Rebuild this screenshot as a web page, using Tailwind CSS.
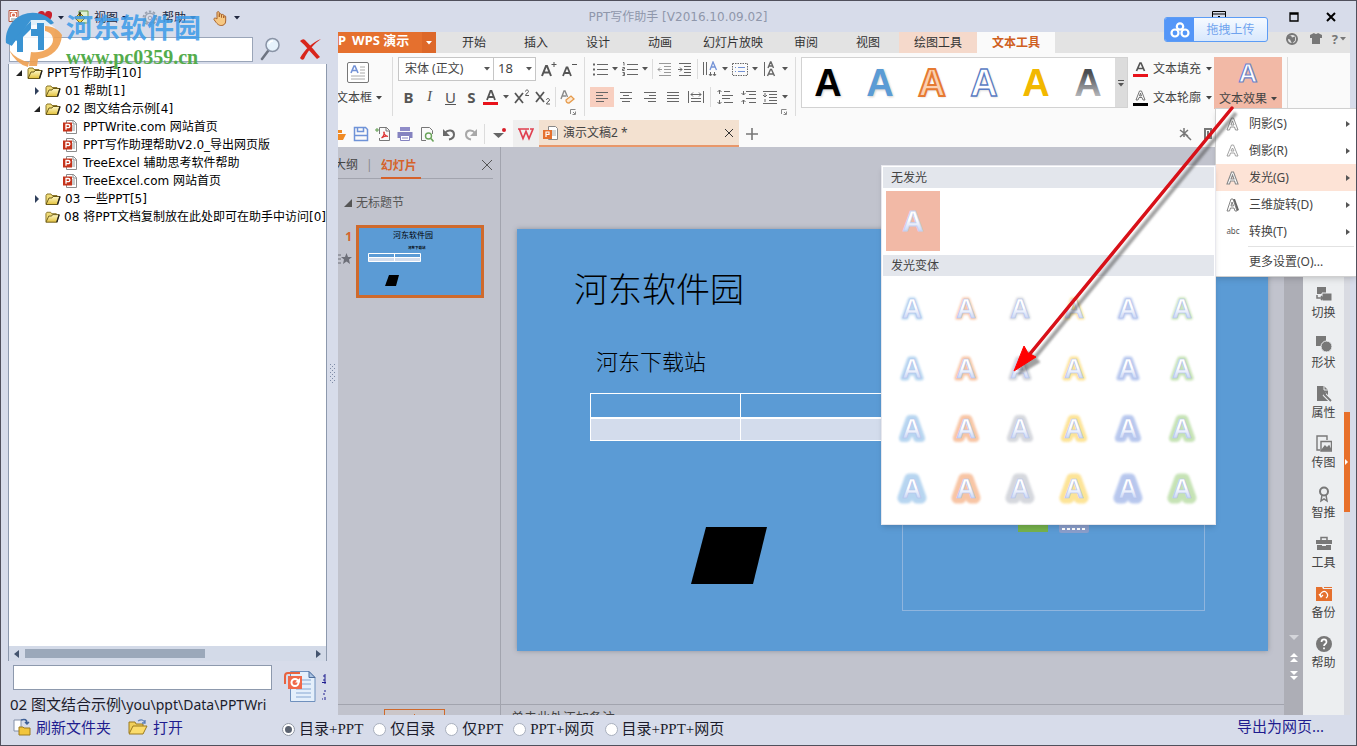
<!DOCTYPE html>
<html lang="zh-CN">
<head>
<meta charset="utf-8">
<title>PPT写作助手</title>
<script src="https://cdn.jsdelivr.net/npm/@tailwindcss/browser@4"></script>
</head>
<body class="relative flex h-screen flex-col overflow-hidden border border-[#50505c] bg-[#d7dcea] font-['Noto_Sans','Noto_Sans_CJK_SC',sans-serif] text-xs text-[#444]">

<svg class="absolute h-0 w-0" aria-hidden="true">
  <defs>
    <linearGradient id="folderFill" x1="0" y1="0" x2="0" y2="1"><stop offset="0" stop-color="#fff9c8"/><stop offset="1" stop-color="#e2c13c"/></linearGradient>
    <linearGradient id="glassA" x1="0" y1="0" x2="0" y2="1"><stop offset=".45" stop-color="#fff"/><stop offset=".85" stop-color="#c3d1f5"/></linearGradient>
    <linearGradient id="greyA" x1="0" y1="0" x2="0" y2="1"><stop offset=".25" stop-color="#4a4c50"/><stop offset=".85" stop-color="#bcbec2"/></linearGradient>
    <filter id="soft" x="-40%" y="-40%" width="180%" height="180%"><feGaussianBlur stdDeviation="1.2"/></filter>
  </defs>
  <symbol id="caret" viewBox="0 0 6 4"><path d="M0 0h6L3 3.5z" fill="currentColor"/></symbol>
  <symbol id="folder" viewBox="0 0 16 14">
    <path d="M1 12V3.500l1-1.500h4l1 1.500h5V6" fill="#f0dc78" stroke="#8a7628" stroke-width="1"/>
    <path d="M1 12.500 4 6h3l1-1.500h7L12.500 12.500z" fill="url(#folderFill)" stroke="#6b5a18" stroke-width="1"/>
    <path d="M15 4.500 12.500 12.500" stroke="#222" stroke-width="1.400"/>
  </symbol>
  <symbol id="pptfile" viewBox="0 0 14 14">
    <path d="M3.500.500h7l3 3v10h-10z" fill="#fff" stroke="#8c8c8c"/><path d="M10 .500v3.500h3.500" fill="none" stroke="#8c8c8c"/>
    <path d="M9 6h3M9 8h3M9 10h3" stroke="#999"/>
    <path d="M0 2.500h9v9H0z" fill="#c5331b"/><path d="M3 9.800V4.500h2.300a1.500 1.500 0 0 1 0 3.200H3" fill="none" stroke="#fff" stroke-width="1.300"/>
  </symbol>
  <symbol id="launcher" viewBox="0 0 6 6"><path d="M.5 5V.5H5.500M5.500 2.500v3h-3M3 3l2 2" fill="none" stroke="#888"/></symbol>
</svg>

<div class="flex min-h-0 flex-1">

  <!-- Document library -->
  <aside class="flex w-[337px] shrink-0 flex-col pl-[7px] font-['DejaVu_Sans','Noto_Sans_CJK_SC',sans-serif] text-black">
    <nav class="flex h-[33px] shrink-0 items-center text-[#202840]">
      <button aria-label="PPT" class="w-[29px]"><svg class="h-4 w-4" viewBox="0 0 16 16"><path d="M1 .5h9v11H1z" fill="#fff" stroke="#b4533d"/><path d="M2 2h7v5H2z" fill="#d96a4f"/><circle cx="5.500" cy="5" r="2.200" fill="none" stroke="#fff" stroke-width="1.200"/><path d="M3 9h6M3 11h4" stroke="#888"/></svg></button>
      <button aria-label="收藏" class="flex w-[37px] items-center gap-[5px]"><svg class="h-4 w-4" viewBox="0 0 16 16"><path d="M8 14C2 9.500 1 7.500 1 5a3.500 3.500 0 0 1 7-1 3.500 3.500 0 0 1 7 1c0 2.500-1 4.500-7 9z" fill="#c9202c"/></svg><svg class="h-1 w-1.5"><use href="#caret"/></svg></button>
      <button class="flex w-[68px] items-center gap-1"><svg class="h-4 w-4" viewBox="0 0 16 16"><path d="M5 1h9v12H5z" fill="#dff0d2" stroke="#6d9c4a"/><path d="m1 8 5-5 5 5-5 5z" fill="#edd24a" stroke="#7a6a1c"/><path d="M6 2v5" stroke="#222" stroke-width="1.500"/></svg><span>视图</span><svg class="h-1 w-1.5"><use href="#caret"/></svg></button>
      <button class="flex w-[70px] items-center gap-1"><svg class="h-4 w-4" viewBox="0 0 16 16" fill="none" stroke="#9aa3b2"><circle cx="8" cy="8" r="6.500" stroke-width="2" stroke-dasharray="2.400 1.700"/><circle cx="8" cy="8" r="4.800" stroke-width="1.500"/><circle cx="8" cy="8" r="1.800"/></svg><span>帮助</span><svg class="h-1 w-1.5"><use href="#caret"/></svg></button>
      <button aria-label="手型" class="flex items-center gap-1.5"><svg class="h-4 w-4" viewBox="0 0 16 16"><path d="M5 9V2.500a1.200 1.200 0 0 1 2.300 0V7 4.800a1.100 1.100 0 0 1 2.200 0V7.500 5.500a1.100 1.100 0 0 1 2.200 0V8 6.800a1 1 0 0 1 2 0V11c0 3-2 4.500-4.500 4.500S5 14 2 9.500C1.500 8 3.500 7.500 5 9z" fill="#f6c883" stroke="#a8622a"/></svg><svg class="h-1 w-1.5"><use href="#caret"/></svg></button>
    </nav>
    <div class="flex h-[30px] shrink-0 items-center pl-px">
      <input aria-label="搜索" class="h-[25px] w-[244px] border border-[#9aa5b8] bg-white px-1">
      <button aria-label="查找" class="ml-1.5"><svg class="h-6 w-6" viewBox="0 0 24 24"><path d="m9 14-6 8" stroke="#6d7380" stroke-width="2.500" stroke-linecap="round"/><circle cx="13.500" cy="8" r="6.500" fill="#e6f2fc" stroke="#8a94a6" stroke-width="1.500"/><path d="M10 7a4 4 0 0 1 4-3" fill="none" stroke="#fff" stroke-width="1.500"/></svg></button>
      <button aria-label="清除" class="ml-4"><svg class="h-6 w-6" viewBox="0 0 24 24"><path d="M1 4q3-3 5-1c4 4 10 11 15 17l-3 2C12 16 7 9 1 4zM22 2C16 6 9 13 5 22q-2 2-4-1C6 12 14 5 22 2z" fill="#d8261c"/></svg></button>
    </div>
    <div class="flex min-h-0 w-[319px] flex-1 flex-col border-x border-[#8d99ad] bg-white">
      <ul class="flex-1 overflow-hidden leading-[18px] whitespace-nowrap">
        <li class="flex items-center gap-1 pl-1.5"><svg class="h-2 w-2" viewBox="0 0 8 8"><path d="M7 1v6H1z" fill="#222"/></svg><svg class="h-3.5 w-4"><use href="#folder"/></svg><span>PPT写作助手[10]</span></li>
        <li class="flex items-center gap-1 pl-6"><svg class="h-2 w-2" viewBox="0 0 8 8"><path d="m2 0 4 4-4 4z" fill="#30405c"/></svg><svg class="h-3.5 w-4"><use href="#folder"/></svg><span>01 帮助[1]</span></li>
        <li class="flex items-center gap-1 pl-6"><svg class="h-2 w-2" viewBox="0 0 8 8"><path d="M7 1v6H1z" fill="#222"/></svg><svg class="h-3.5 w-4"><use href="#folder"/></svg><span>02 图文结合示例[4]</span></li>
        <li class="flex items-center gap-1.5 pl-[54px]"><svg class="h-3.5 w-3.5"><use href="#pptfile"/></svg><span>PPTWrite.com 网站首页</span></li>
        <li class="flex items-center gap-1.5 pl-[54px]"><svg class="h-3.5 w-3.5"><use href="#pptfile"/></svg><span>PPT写作助理帮助V2.0_导出网页版</span></li>
        <li class="flex items-center gap-1.5 pl-[54px]"><svg class="h-3.5 w-3.5"><use href="#pptfile"/></svg><span>TreeExcel 辅助思考软件帮助</span></li>
        <li class="flex items-center gap-1.5 pl-[54px]"><svg class="h-3.5 w-3.5"><use href="#pptfile"/></svg><span>TreeExcel.com 网站首页</span></li>
        <li class="flex items-center gap-1 pl-6"><svg class="h-2 w-2" viewBox="0 0 8 8"><path d="m2 0 4 4-4 4z" fill="#30405c"/></svg><svg class="h-3.5 w-4"><use href="#folder"/></svg><span>03 一些PPT[5]</span></li>
        <li class="flex items-center gap-1 pl-9"><svg class="h-3.5 w-4"><use href="#folder"/></svg><span>08 将PPT文档复制放在此处即可在助手中访问[0]</span></li>
      </ul>
      <div class="flex h-[15px] items-center bg-[#d3dae8] px-1">
        <svg class="h-2 w-2" viewBox="0 0 8 8"><path d="M6 0v8L1 4z" fill="#44546e"/></svg>
        <div class="mx-1 flex-1"><div class="h-[9px] w-[63%] bg-[#9ba8ba]"></div></div>
        <svg class="h-2 w-2" viewBox="0 0 8 8"><path d="M2 0v8l5-4z" fill="#44546e"/></svg>
      </div>
    </div>
    <div class="flex h-[33px] shrink-0 pt-1 pl-[5px]">
      <input aria-label="名称" class="h-[25px] w-[259px] border border-[#8d99ad] bg-white px-1">
      <button aria-label="导出PPT" class="ml-3 flex h-9 items-start pt-1.5"><svg class="h-8 w-8" viewBox="0 0 32 32"><path d="M6.500.5H25l6 6v24H6.500z" fill="#e4effb" stroke="#6f90bd"/><path d="M25 .5v6h6z" fill="#a9c2e2" stroke="#4f6f9d"/><path d="M18 9h9M18 13h9M12 18h15M12 22h15M12 26h15" stroke="#86a7d2"/><path d="M1 13V5q0-3 3-3h12" fill="none" stroke="#e8633f" stroke-width="2"/><path d="M4 5h14v13H4z" fill="#f0694a"/><circle cx="11" cy="11.500" r="3.500" fill="none" stroke="#fff" stroke-width="2"/><path d="M11 11.500h5V7z" fill="#fff"/></svg></button>
      <svg class="mt-2 ml-1.5 h-8 w-1" viewBox="0 0 4 32"><path d="M3 1v10M1 3h2M1 7h2M0 9.500h4M3 17v2M1 21h2M3 24v3M0 26h1" stroke="#1f1c8f"/></svg>
    </div>
    <p class="h-[21px] w-[262px] shrink-0 overflow-hidden pl-0.5 font-['Noto_Sans','Noto_Sans_CJK_SC',sans-serif] text-[15px] leading-5 whitespace-nowrap text-[#1c1c2c]">02 图文结合示例<span class="text-sm">\you\ppt\Data\PPTWri</span></p>
  </aside>

  <!-- Editor -->
  <main class="flex min-w-0 flex-1 flex-col">
    <header class="flex h-[31px] shrink-0 items-center pr-[19px] text-black">
      <h1 class="w-[680px] text-center font-['DejaVu_Sans','Noto_Sans_CJK_SC',sans-serif] text-[#8f97ab]">PPT写作助手 [V2016.10.09.02]</h1>
      <div class="flex flex-1 justify-end gap-[25px]">
        <button aria-label="收起功能区"><svg class="h-3 w-3.5" viewBox="0 0 14 12"><path d="M.5.5h13v11H.5zM.5 3h13M7 11V5M4.500 7.500 7 5l2.500 2.500" fill="none" stroke="#000"/></svg></button>
        <button aria-label="最小化"><svg class="h-3 w-3" viewBox="0 0 12 12"><path d="M1 7h9" stroke="#000" stroke-width="2"/></svg></button>
        <button aria-label="最大化"><svg class="h-3 w-3" viewBox="0 0 12 12"><path d="M2 2h8v8H2zM2 3h8" fill="none" stroke="#000" stroke-width="1.300"/></svg></button>
        <button aria-label="关闭"><svg class="h-3 w-3" viewBox="0 0 12 12"><path d="m2 2 8 8m0-8-8 8" stroke="#000" stroke-width="2"/></svg></button>
      </div>
    </header>

    <div class="mr-1.5 flex min-h-0 flex-1 flex-col overflow-hidden">
      <!-- Ribbon tabs -->
      <nav class="flex h-[21px] shrink-0 bg-[#e3e3e3] leading-[21px] text-[#333]">
        <button class="mr-[7px] flex w-[98px] items-start bg-[#e5702e] text-[13px] leading-4 font-bold whitespace-nowrap text-white"><span>P</span><span class="ml-1.5">WPS 演示</span><span class="ml-auto flex h-full w-3.5 items-center justify-center bg-[#dd6829]"><svg class="h-1 w-1.5"><use href="#caret"/></svg></span></button>
        <button class="w-[62px]">开始</button><button class="w-[62px]">插入</button><button class="w-[62px]">设计</button><button class="w-[62px]">动画</button><button class="w-[84px]">幻灯片放映</button><button class="w-[62px]">审阅</button><button class="w-[62px]">视图</button>
        <button class="w-[78px] bg-[#f5d9cb]">绘图工具</button>
        <button class="w-[78px] bg-[#fafafa] font-bold text-[#cf5f1e]">文本工具</button>
        <div class="ml-auto flex items-center gap-2 pr-1 pb-2 text-[#777]">
          <svg class="h-3.5 w-4" viewBox="0 0 16 14"><circle cx="8" cy="7" r="5" fill="none" stroke="#777" stroke-width="2"/><path d="M3 3.500h4l1 2 3-1v4l-3 3-2-4-3-1z" fill="#777"/></svg>
          <svg class="h-3 w-4" viewBox="0 0 16 12"><path d="m2 2 4-2q2 2 4 0l4 2v3h-2v6H4V5H2z" fill="#777"/></svg>
          <button aria-label="帮助菜单" class="flex items-center gap-0.5 text-[13px] leading-3 font-bold">?<svg class="h-1 w-1.5"><use href="#caret"/></svg></button>
        </div>
      </nav>

      <!-- Ribbon -->
      <section class="flex h-[67px] shrink-0 bg-[#fafafa] pt-1 text-[#555]">
        <button class="flex w-[54px] flex-col gap-2 overflow-hidden whitespace-nowrap">
          <svg class="mt-1 ml-2 h-[23px] w-6" viewBox="0 0 24 23"><rect x="1.500" y="1.500" width="21" height="20" rx="1.500" fill="#fff" stroke="#777"/><path d="m5 12 3-7h1l3 7M6.500 9.500h4" fill="none" stroke="#7392d6" stroke-width="1.600"/><path d="M14 6h5M14 9h5M14 12h5M5 15h14M5 18h14" stroke="#aaa"/></svg>
          <span class="-ml-0.5 flex items-center gap-1 leading-3 text-[#444]">文本框<svg class="h-1 w-1.5"><use href="#caret"/></svg></span>
        </button>
        <div class="mb-1 flex w-[192px] flex-col border-l border-[#dcdcdc] pl-[5px]">
          <div class="flex h-6 items-center">
            <label class="relative"><span class="sr-only">字体</span><select class="h-6 w-24 appearance-none border border-[#c6c6c6] bg-white px-1.5 text-[#444]"><option>宋体 (正文)</option></select><svg class="absolute top-2.5 right-1 h-1 w-1.5"><use href="#caret"/></svg></label>
            <label class="relative"><span class="sr-only">字号</span><select class="h-6 w-[42px] appearance-none border border-l-0 border-[#c6c6c6] bg-white px-1 text-[13px] text-[#444]"><option>18</option></select><svg class="absolute top-2.5 right-1 h-1 w-1.5"><use href="#caret"/></svg></label>
            <button aria-label="增大字号" class="ml-1"><svg class="h-[18px] w-[18px]" viewBox="0 0 18 18" fill="none" stroke="#555"><path d="m2 16 4-10h1l4 10M4 12.500h5.500" stroke-width="2"/><path d="M14 2v5M11.500 4.500h5"/></svg></button>
            <button aria-label="减小字号" class="ml-0.5"><svg class="h-[18px] w-[18px]" viewBox="0 0 18 18" fill="none" stroke="#555"><path d="m3 16 3.500-8.500h1L11 16M4.500 13h5" stroke-width="1.800"/><path d="M12 4.500h5"/></svg></button>
          </div>
          <div class="mt-1.5 flex h-5 items-center font-['Noto_Sans',sans-serif] text-[15px]">
            <button class="w-[21px] font-bold">B</button><button class="w-[21px] font-['Liberation_Serif',serif] italic">I</button><button class="w-[21px] underline">U</button><button class="w-[21px] font-bold">S</button>
            <button aria-label="字体颜色" class="flex w-[31px] items-center gap-1"><svg class="ml-px h-4 w-4" viewBox="0 0 16 16"><path d="m4 11 3.500-9h1L12 11M5.500 8h5" fill="none" stroke="#555" stroke-width="1.800"/><path d="M0 13h15v3H0z" fill="#e8121a"/></svg><svg class="h-1 w-1.5"><use href="#caret"/></svg></button>
            <button aria-label="上标" class="w-[21px]"><svg class="h-4 w-[18px]" viewBox="0 0 18 16" fill="none" stroke="#555"><path d="m2 4 8 10m0-10L2 14" stroke-width="1.800"/><path d="M12.500 2.500c0-2 3-2 3 0 0 1.500-3 2-3 4h3.500"/></svg></button>
            <button aria-label="下标" class="w-[21px]"><svg class="h-4 w-[18px]" viewBox="0 0 18 16" fill="none" stroke="#555"><path d="m2 3 8 10m0-10L2 13" stroke-width="1.800"/><path d="M12.500 11c0-2 3-2 3 0 0 1.500-3 2-3 4h3.500"/></svg></button>
            <span class="h-5 w-px bg-[#dcdcdc]"></span>
            <button aria-label="清除格式" class="ml-1"><svg class="h-4 w-4" viewBox="0 0 16 16" fill="none"><path d="M1 10 4 2h1l2.500 6M2.500 7H6" stroke="#8a8a8a" stroke-width="1.400"/><path d="m6 11 5-4 3 3-5 4q-3 0-3-3z" fill="#fde8d0" stroke="#e59a4c" stroke-width="1.300"/></svg></button>
          </div>
          <button aria-label="字体设置" class="mt-0.5 mr-2 self-end"><svg class="h-1.5 w-1.5"><use href="#launcher"/></svg></button>
        </div>
        <div class="mb-1 flex w-[211px] flex-col border-l border-[#dcdcdc] pl-[5px]">
          <div class="flex h-6 items-center">
            <button aria-label="项目符号" class="flex w-[30px] items-center justify-center gap-1"><svg class="h-4 w-4" viewBox="0 0 16 16" stroke="#666"><path d="M5 3.500h11M5 8.500h11M5 13.500h11"/><path d="M1 3.500h2M1 8.500h2M1 13.500h2" stroke-width="2"/></svg><svg class="h-1 w-1.5"><use href="#caret"/></svg></button>
            <button aria-label="编号" class="flex w-[30px] items-center justify-center gap-1"><svg class="h-4 w-4" viewBox="0 0 16 16" fill="none" stroke="#666"><path d="M5 3.500h11M5 8.500h11M5 13.500h11M1 1.500h1v3M.5 6.500h2v1.500h-2v1.500h2M.5 11.500h2v3h-2M1 13h1"/></svg><svg class="h-1 w-1.5"><use href="#caret"/></svg></button>
            <span class="mx-0.5 h-5 w-px bg-[#dcdcdc]"></span>
            <button aria-label="减少缩进" class="flex w-5 justify-center"><svg class="h-4 w-4" viewBox="0 0 16 16" fill="none" stroke="#999"><path d="M2 2.500h12M7 5.500h7M7 8.500h7M7 11.500h7M2 14.500h12M5 8.500H1m2-2-2 2 2 2"/></svg></button>
            <button aria-label="增加缩进" class="flex w-5 justify-center"><svg class="h-4 w-4" viewBox="0 0 16 16" fill="none" stroke="#666"><path d="M2 2.500h12M7 5.500h7M7 8.500h7M7 11.500h7M2 14.500h12M1 8.500h4m-2-2 2 2-2 2"/></svg></button>
            <span class="mx-0.5 h-5 w-px bg-[#dcdcdc]"></span>
            <button aria-label="文字方向" class="flex w-[30px] items-center justify-center gap-1"><svg class="h-4 w-4" viewBox="0 0 16 16" fill="none" stroke="#666"><path d="M1.500 1v13M4.500 1v13M8.500 11v3M12.500 11v3M7 13l1.500 2 1.500-2M11 13l1.500 2 1.500-2"/><path d="m8 9 3-8 3.500 8M9.500 6H13" stroke="#7392d6" stroke-width="1.300"/></svg><svg class="h-1 w-1.5"><use href="#caret"/></svg></button>
            <button aria-label="对齐文本" class="flex w-[30px] items-center justify-center gap-1"><svg class="h-4 w-4" viewBox="0 0 16 16" fill="none"><rect x=".5" y="2.500" width="15" height="12" stroke="#666" stroke-dasharray="1.500 1"/><path d="M3 6.500h1M6 6.500h7M3 10.500h1M6 10.500h7" stroke="#7392d6"/></svg><svg class="h-1 w-1.5"><use href="#caret"/></svg></button>
            <button aria-label="字符间距" class="flex w-[30px] items-center justify-center gap-1"><svg class="h-4 w-4" viewBox="0 0 16 16" fill="none" stroke="#666"><path d="M2.500 1v14"/><path d="m6 7 2.500-6h.5l2.500 6M7 5h4M5.500 15 8.500 8.500h1l3 6.500M7 13h4.500" stroke-width="1.400"/></svg><svg class="h-1 w-1.5"><use href="#caret"/></svg></button>
          </div>
          <div class="mt-1.5 flex h-5 items-center">
            <button aria-label="左对齐" class="flex h-5 w-6 items-center justify-center bg-[#f8cfc0]"><svg class="h-3.5 w-3.5" viewBox="0 0 14 14" stroke="#666"><path d="M1 2.500h12M1 5.500h7M1 8.500h12M1 11.500h8"/></svg></button>
            <button aria-label="居中" class="flex w-6 justify-center"><svg class="h-3.5 w-3.5" viewBox="0 0 14 14" stroke="#666"><path d="M1 2.500h12M4 5.500h6M1 8.500h12M3 11.500h8"/></svg></button>
            <button aria-label="右对齐" class="flex w-6 justify-center"><svg class="h-3.5 w-3.5" viewBox="0 0 14 14" stroke="#666"><path d="M1 2.500h12M6 5.500h7M1 8.500h12M5 11.500h8"/></svg></button>
            <button aria-label="两端对齐" class="flex w-[22px] justify-center"><svg class="h-3.5 w-3.5" viewBox="0 0 14 14" stroke="#666"><path d="M1 2.500h12M1 5.500h12M1 8.500h12M1 11.500h12"/></svg></button>
            <button aria-label="分散对齐" class="flex w-6 justify-center"><svg class="h-3.5 w-4" viewBox="0 0 16 14" fill="none" stroke="#666"><path d="M.5 1v12M15.500 1v12M3 4.500h10M5 2.500l-2 2 2 2M11 2.500l2 2-2 2M3 8.500h10M3 11.500h10"/></svg></button>
            <span class="mx-0.5 h-5 w-px bg-[#dcdcdc]"></span>
            <button aria-label="行距" class="flex w-6 justify-center"><svg class="h-4 w-4" viewBox="0 0 16 16" fill="none" stroke="#666"><path d="M7 2.500h6M5 6.500h11M5 9.500h8M7 13.500h9M2.500 5V1m-2 2 2-2 2 2M2.500 11v4m-2-2 2 2 2-2"/></svg></button>
            <button aria-label="段落间距" class="flex w-[23px] justify-center"><svg class="h-4 w-4" viewBox="0 0 16 16" fill="none" stroke="#666"><path d="M5 2.500h10M8 5.500h7M5 9.500h10M8 13.500h7M2.500 2v4m-2-2 2 2 2-2M2.500 15v-4m-2 2 2-2 2 2"/></svg></button>
            <button aria-label="段前间距" class="flex w-[30px] items-center justify-center gap-1"><svg class="h-4 w-4" viewBox="0 0 16 16" fill="none" stroke="#666"><path d="M1 2.500h14M7 5.500h8M7 8.500h8M7 11.500h8M1 14.500h14M3 4v3m-2-1 2 2 2-2M3 13v-3"/></svg><svg class="h-1 w-1.5"><use href="#caret"/></svg></button>
          </div>
          <button aria-label="段落设置" class="mt-0.5 mr-2 self-end"><svg class="h-1.5 w-1.5"><use href="#launcher"/></svg></button>
        </div>
        <div class="mb-1 flex border-l border-[#dcdcdc] pl-[5px]">
          <div class="flex h-[51px] border border-[#d2d2d2] bg-white">
            <svg class="h-[49px] w-[313px]" viewBox="0 0 313 49" font-family="Liberation Sans, sans-serif" font-weight="700" font-size="38" text-anchor="middle" role="img" aria-label="艺术字样式">
              <g fill="#999" opacity=".5" filter="url(#soft)"><text x="27" y="39">A</text><text x="79" y="39">A</text><text x="131" y="39">A</text><text x="183" y="39">A</text></g>
              <text x="26" y="38" fill="#000">A</text>
              <text x="78" y="38" fill="#5b9bd5">A</text>
              <text x="130" y="38" fill="#fbd0b0" stroke="#e67a32" stroke-width="2">A</text>
              <text x="182" y="38" fill="#fff" stroke="#5a7cc4" stroke-width="1.300">A</text>
              <text x="234" y="38" fill="#f2b800">A</text>
              <text x="286" y="38" fill="url(#greyA)">A</text>
            </svg>
            <button aria-label="更多样式" class="flex w-3 items-center justify-center bg-[#dcdcdc]"><svg class="h-2 w-1.5" viewBox="0 0 6 8"><path d="M0 1.500h6" stroke="#555"/><path d="M0 4h6L3 7.500z" fill="#555"/></svg></button>
          </div>
        </div>
        <div class="flex flex-col pl-[5px] whitespace-nowrap text-[#444]">
          <button class="flex h-6 items-center gap-[5px]"><svg class="h-4 w-[15px]" viewBox="0 0 15 16"><path d="m3.500 10 3.500-8h1l3.500 8M5 7.500h5" fill="none" stroke="#555" stroke-width="1.700"/><path d="M0 13h15v3H0z" fill="#e8121a"/></svg>文本填充<svg class="h-1 w-1.5"><use href="#caret"/></svg></button>
          <button class="mt-[5px] flex h-6 items-center gap-[5px]"><svg class="h-4 w-[15px]" viewBox="0 0 15 16"><path d="m3 10 3.500-9h2l3.500 9h-2L9 7.500H6L5 10zM6.500 6h2l-1-3z" fill="#fff" stroke="#666" stroke-width=".9"/><path d="M0 13h15v3H0z" fill="#000"/></svg>文本轮廓<svg class="h-1 w-1.5"><use href="#caret"/></svg></button>
        </div>
        <button class="ml-0.5 flex h-[52px] w-[68px] flex-col items-center justify-between bg-[#f2b9a6] pt-1 whitespace-nowrap text-[#444]">
          <svg class="h-6 w-6" viewBox="0 0 24 24"><text x="12" y="21" text-anchor="middle" font-family="Liberation Sans, sans-serif" font-size="26" font-weight="700" fill="#fff" stroke="#6c82c8" stroke-width="1.200">A</text></svg>
          <span class="flex items-center gap-1 leading-5">文本效果<svg class="h-1 w-1.5"><use href="#caret"/></svg></span>
        </button>
        <span class="mb-1 ml-[5px] w-px bg-[#dcdcdc]"></span>
      </section>

      <!-- Quick access and open documents -->
      <section class="flex h-[27px] shrink-0 items-center bg-[#fafafa]">
        <button aria-label="打开文件" class="w-3 overflow-hidden"><svg class="h-4 w-3" viewBox="0 0 12 16"><path d="M0 8h8l-3 6H0zM0 4h4v3H0z" fill="#f08a24"/></svg></button>
        <button aria-label="保存" class="flex w-[22px] justify-center"><svg class="h-4 w-4" viewBox="0 0 16 16" fill="none" stroke="#6f93d8" stroke-width="1.500"><path d="M1.500 1.500h11l2 2v11h-13zM4.500 1.500v4h6v-4M1.500 9.500h13"/></svg></button>
        <button aria-label="输出为PDF" class="flex w-[22px] justify-center"><svg class="h-4 w-4" viewBox="0 0 16 16" fill="none"><path d="M4.500 8V1.500h7l3 3v10h-10V12" stroke="#777"/><path d="M11 1v4h3.500" stroke="#777"/><path d="M6.500 12c3-2 3-6 2.500-6s-.5 3 4 4.500c-3-1-4 0-6.500 1.500z" stroke="#d33" stroke-width="1.200"/><path d="M0 4h4M2 2v4" stroke="#5a9a4a"/></svg></button>
        <button aria-label="打印" class="flex w-[22px] justify-center"><svg class="h-4 w-4" viewBox="0 0 16 16"><path d="M3 1h10v4H3z" fill="#8f8cc8"/><path d="M.5 6h15v6H.5z" fill="#8583c0"/><path d="M3.500 9.500h9v5h-9z" fill="#fff" stroke="#8583c0"/><path d="M5 12h6" stroke="#8583c0"/></svg></button>
        <button aria-label="打印预览" class="flex w-[22px] justify-center"><svg class="h-4 w-4" viewBox="0 0 16 16" fill="none"><path d="M7 14.500H2.500v-13h8l3 3V8" stroke="#777"/><circle cx="9.500" cy="10" r="3" stroke="#6aa45a" stroke-width="1.400"/><path d="m12 12.500 2.500 3" stroke="#6aa45a" stroke-width="1.600"/></svg></button>
        <button aria-label="撤销" class="flex w-[22px] justify-center"><svg class="h-4 w-4" viewBox="0 0 16 16"><path d="M4 7c3-4 9-3 9 1.500 0 3-2.500 4.500-5 5" fill="none" stroke="#6a6a6a" stroke-width="2"/><path d="M2 3v7h7z" fill="#6a6a6a"/></svg></button>
        <button aria-label="恢复" class="flex w-[22px] justify-center"><svg class="h-4 w-4" viewBox="0 0 16 16"><path d="M12 7C9 3 3 4 3 8.500c0 3 2.500 4.500 5 5" fill="none" stroke="#a8a8a8" stroke-width="2"/><path d="M14 3v7H7z" fill="#a8a8a8"/></svg></button>
        <span class="ml-0.5 h-5 w-px bg-[#dcdcdc]"></span>
        <button aria-label="更多命令" class="flex w-7 justify-center"><svg class="h-4 w-4" viewBox="0 0 16 16"><path d="M2 7h11l-5.500 5z" fill="#666"/><circle cx="13" cy="4" r="2" fill="#d8202a"/></svg></button>
        <button aria-label="WPS" class="flex h-full w-[26px] items-center justify-center bg-[#efefef]"><svg class="h-3.5 w-4" viewBox="0 0 16 14" fill="none" stroke="#e04050" stroke-width="1.700"><path d="M0 2h11M1.500 2.500 5 11.500l3-7 3 7 4-9.500h-3"/></svg></button>
        <div class="flex h-full w-[200px] items-center border-b-2 border-[#e8976a] bg-[#f3e1d0] px-1 text-[#444]">
          <svg class="h-3.5 w-4" viewBox="0 0 16 14"><path d="M5.500.5h7l2 2v11h-9z" fill="#fff" stroke="#888"/><path d="M9 5h4M9 7h4M9 9h4" stroke="#aaa"/><path d="M0 4h9v9H0z" fill="#e5702e"/><path d="M3 11V6h3v2.500H3" fill="none" stroke="#fff" stroke-width="1.200"/></svg>
          <span class="ml-1">演示文稿2 *</span>
          <button aria-label="关闭文档" class="mr-0.5 ml-auto"><svg class="h-2 w-2" viewBox="0 0 8 8"><path d="m0 0 8 8m0-8-8 8" stroke="#333"/></svg></button>
        </div>
        <button aria-label="新建文档" class="ml-[7px]"><svg class="h-3 w-3" viewBox="0 0 12 12"><path d="M6 0v12M0 6h12" stroke="#777" stroke-width="1.600"/></svg></button>
        <svg class="mr-3 ml-auto h-3.5 w-3.5" viewBox="0 0 14 14"><path d="M6 1v9M2 3l8 6M10 3 2 10M7 7l6 6" stroke="#777" stroke-width="1.500"/></svg>
        <svg class="mr-[138px] h-3 w-2" viewBox="0 0 8 12"><path d="M1 1h6v9H1zM4 3v5" fill="none" stroke="#777" stroke-width="2"/></svg>
      </section>

      <!-- Work area -->
      <div class="flex min-h-0 flex-1 bg-[#c1c3cd]">
        <section class="flex w-[163px] shrink-0 flex-col border-r border-[#a2a4ae]">
          <div class="mr-[7px] flex h-8 items-stretch border-b border-[#a2a4ae] whitespace-nowrap">
            <button class="-ml-1 pt-1">大纲</button><span class="mx-2 self-center pt-1 text-[#888]">|</span>
            <button class="-mb-px border-b-2 border-[#d5622a] pt-2 pr-1 font-bold text-[#d5622a]">幻灯片</button>
            <button aria-label="关闭窗格" class="mt-1 mr-px ml-auto"><svg class="h-2.5 w-2.5" viewBox="0 0 10 10"><path d="m0 0 10 10M10 0 0 10" stroke="#555"/></svg></button>
          </div>
          <p class="mt-4 flex items-center gap-1 pl-1.5 text-[#555]"><svg class="h-2 w-2" viewBox="0 0 8 8"><path d="M8 0v8H0z" fill="#555"/></svg>无标题节</p>
          <div class="mt-3.5 flex">
            <div class="flex w-[18px] flex-col items-end gap-2 pr-1"><span class="pt-1 font-bold text-[#d5622a]">1</span><svg class="h-3 w-3.5" viewBox="0 0 14 12"><path d="m8.500 0 1.500 4h4l-3 2.500 1 4.500-3.500-2.500L5 11l1-4.500L3 4h4z" fill="#6d6f78"/><path d="M0 2h3M0 6h3M0 10h3" stroke="#6d6f78"/></svg></div>
            <button aria-label="幻灯片 1" class="h-[73px] w-32 border-[3px] border-[#cf6a2c] bg-[#5b9bd5]">
              <svg class="h-full w-full" viewBox="0 0 122 67" font-family="Noto Sans CJK SC, sans-serif"><text x="34" y="10" font-size="8">河东软件园</text><text x="49" y="21" font-size="3.500" font-weight="700">河东下载站</text><path d="M9.500 25.500h52v4h-52z" fill="#5b9bd5" stroke="#fff"/><path d="M9.500 29.500h52v4h-52z" fill="#d3dded" stroke="#fff"/><path d="M35.500 25v8" stroke="#fff"/><path d="M30 47h10l-3 11H26z"/></svg>
            </button>
          </div>
          <div class="mt-auto flex h-[11px] justify-center border-t border-[#a2a4ae] pt-1 pr-2.5"><button aria-label="新建幻灯片" class="flex h-[7px] w-[61px] justify-center border border-b-0 border-[#cf6a2c] bg-[#cbc6c8]"><span class="mt-1 h-1 w-px bg-[#cf6a2c]"></span></button></div>
        </section>

        <section class="flex min-w-0 flex-1 flex-col">
          <div class="flex-1 px-4 pt-[82px]">
            <!-- Slide canvas -->
            <div class="relative aspect-[751/422] w-full bg-[#5b9bd5] font-['Noto_Sans_CJK_SC',sans-serif] text-black shadow-[0_0_5px_#8f929c]">
              <h2 class="absolute top-[34px] left-[57px] text-[34px] leading-[50px] font-light">河东软件园</h2>
              <p class="absolute top-[115px] left-[79px] text-[22px] leading-8 font-light">河东下载站</p>
              <table class="absolute top-[164px] left-[73px] w-[301px] border-collapse border border-white" aria-label="表格"><tbody><tr class="h-6 border-b-2 border-white"><td class="border-r border-white"></td><td></td></tr><tr class="h-[23px] bg-[#d3dcec]"><td class="border-r border-white"></td><td></td></tr></tbody></table>
              <svg class="absolute top-[297px] left-[174px] h-[59px] w-[78px]" viewBox="0 0 78 59"><path d="M15 1h61L62 58H0z"/></svg>
              <div class="absolute top-[170px] left-[385px] h-[212px] w-[303px] border border-[#8fb5de]"></div>
              <div class="absolute top-[280px] left-[501px] h-[23px] w-[30px] bg-[#76b24c]"></div>
              <svg class="absolute top-[280px] left-[542px] h-6 w-[30px]" viewBox="0 0 30 24"><rect width="30" height="24" rx="2" fill="#8a9ecb"/><path d="M3 20h25" stroke="#fff" stroke-width="2" stroke-dasharray="3 2"/></svg>
            </div>
          </div>
          <div class="h-[11px] overflow-hidden border-t border-[#a2a4ae] pt-1 pl-2.5 text-[13px]">单击此处添加备注</div>
        </section>

        <div class="flex w-[19px] flex-col items-center justify-end gap-2 bg-[#adaeb6] pb-[34px]">
          <svg class="h-1.5 w-2.5" viewBox="0 0 10 6"><path d="M0 0h10L5 5z" fill="#d4d5da"/></svg>
          <svg class="mt-1 h-2.5 w-2" viewBox="0 0 8 10"><path d="m4 0 4 4H0zM4 5l4 4H0z" fill="#fff"/></svg>
          <svg class="h-2.5 w-2" viewBox="0 0 8 10"><path d="M0 0h8L4 4zM0 5h8L4 9z" fill="#fff"/></svg>
        </div>
        <nav class="flex w-[41px] flex-col bg-[#eceef0] pt-[137px] text-[#444]">
          <button class="flex h-[50px] flex-col items-center gap-px"><svg class="h-5 w-4" viewBox="0 0 16 20" fill="#787878"><path d="M1 3h9v7H1z"/><path d="M6 9h10v8H6z" stroke="#eceef0"/><path d="M1 11v3h6m-2-2 2 2-2 2" fill="none" stroke="#787878" stroke-width="1.500"/></svg><span class="leading-4">切换</span></button>
          <button class="flex h-[50px] flex-col items-center gap-px"><svg class="h-5 w-4" viewBox="0 0 16 20" fill="#787878"><path d="M0 2h10v10H0z"/><circle cx="10.500" cy="12.500" r="5.500" stroke="#eceef0"/></svg><span class="leading-4">形状</span></button>
          <button class="flex h-[50px] flex-col items-center gap-px"><svg class="h-5 w-4" viewBox="0 0 16 20"><path d="M1 2h7l4 4v11H1z" fill="#787878"/><path d="M8 2v4h4" stroke="#eceef0" fill="none"/><path d="m8 10 7 7" stroke="#eceef0" stroke-width="4"/><path d="m8 10 7 7M7 9l3 1" stroke="#787878" stroke-width="1.800"/></svg><span class="leading-4">属性</span></button>
          <button class="flex h-[50px] flex-col items-center gap-px"><svg class="h-5 w-4" viewBox="0 0 16 20" fill="none" stroke="#787878" stroke-width="1.400"><path d="M4 16H1V2h10v4M5 7.500h10.500V17H5z"/><path d="m6 16 3-4 2 2 2-2 2 4z" fill="#787878"/></svg><span class="leading-4">传图</span></button>
          <button class="flex h-[50px] flex-col items-center gap-px"><svg class="h-5 w-4" viewBox="0 0 16 20" fill="none" stroke="#787878" stroke-width="2"><circle cx="8" cy="7.500" r="4"/><path d="m6 11-1 6 3-2 3 2-1-6" stroke-width="1.500"/></svg><span class="leading-4">智推</span></button>
          <button class="flex h-[50px] flex-col items-center gap-px"><svg class="h-5 w-4" viewBox="0 0 16 20"><path d="M5 6V3.500h6V6" fill="none" stroke="#787878" stroke-width="1.500"/><path d="M0 6h16v4H0zM1 11h5v1h4v-1h5v5H1z" fill="#787878"/></svg><span class="leading-4">工具</span></button>
          <button class="flex h-[50px] flex-col items-center gap-px"><svg class="h-5 w-4" viewBox="0 0 16 20"><path d="M0 3h6l1 2h9v12H0z" fill="#e5702e"/><path d="M8 3h8v1H8z" fill="#e5702e"/><path d="M5 13a3.500 3.500 0 1 1 5 1M3 10l2 3 2-2" fill="none" stroke="#fff" stroke-width="1.200"/></svg><span class="leading-4">备份</span></button>
          <button class="flex h-[50px] flex-col items-center gap-px"><svg class="h-5 w-4" viewBox="0 0 16 20"><circle cx="8" cy="10" r="8" fill="#787878"/><path d="M5.500 8c0-3.500 5-3.500 5 0 0 2-2.500 2-2.500 4M8 13.500v1.700" fill="none" stroke="#fff" stroke-width="1.700"/></svg><span class="leading-4">帮助</span></button>
        </nav>
        <div class="w-1.5 bg-[#d9dbe2] pt-[265px]"><button aria-label="展开侧栏" class="flex h-[100px] w-full items-center bg-[#e8702a]"><svg class="h-1.5 w-1" viewBox="0 0 4 6"><path d="M1 0v6l3-3z" fill="#fff"/></svg></button></div>
      </div>
    </div>
  </main>
</div>

<!-- Footer -->
<footer class="flex h-[30px] shrink-0 items-center pr-8 pl-3 text-[15px] whitespace-nowrap text-[#1f1c8f]">
  <div class="flex w-[269px] items-center pb-1.5">
    <button class="flex items-center gap-[5px]"><svg class="h-[18px] w-[18px]" viewBox="0 0 18 18"><path d="M1 2h7v11H1z" fill="#fff" stroke="#8390a8"/><path d="M8 2q6-2 6 3m-2-1 2 2 2-2" fill="none" stroke="#3e5f96" stroke-width="1.500"/><path d="M6 9h4l1 1h6v7H6z" fill="#f2c53c" stroke="#9c7a1e"/></svg>刷新文件夹</button>
    <button class="ml-[17px] flex items-center gap-[5px]"><svg class="h-[18px] w-5" viewBox="0 0 20 18"><path d="M1 15V4h6l1 2h7v3" fill="#f0cf5a" stroke="#9c7a1e"/><path d="m1 16 4-8h14l-4 8z" fill="#fbdc6c" stroke="#9c7a1e"/><path d="M10 3q5-3 7 2m0-3v3h-3" fill="none" stroke="#5b7fb8" stroke-width="1.300"/></svg>打开</button>
  </div>
  <fieldset class="flex items-center gap-2.5 font-['Liberation_Serif','Noto_Sans_CJK_SC',serif] text-[#1c1c2c]">
    <label class="flex items-center gap-1"><input type="radio" name="view" checked class="h-[13px] w-[13px] appearance-none rounded-full border border-[#99a1b0] bg-white checked:border-[3px] checked:border-white checked:bg-[#5a6270] checked:outline checked:-outline-offset-1 checked:outline-[#8a92a2]">目录+PPT</label>
    <label class="flex items-center gap-1"><input type="radio" name="view" class="h-[13px] w-[13px] appearance-none rounded-full border border-[#a9b0be] bg-white">仅目录</label>
    <label class="flex items-center gap-1"><input type="radio" name="view" class="h-[13px] w-[13px] appearance-none rounded-full border border-[#a9b0be] bg-white">仅PPT</label>
    <label class="flex items-center gap-1"><input type="radio" name="view" class="h-[13px] w-[13px] appearance-none rounded-full border border-[#a9b0be] bg-white">PPT+网页</label>
    <label class="flex items-center gap-1"><input type="radio" name="view" class="h-[13px] w-[13px] appearance-none rounded-full border border-[#a9b0be] bg-white">目录+PPT+网页</label>
  </fieldset>
  <button class="ml-auto pb-2">导出为网页...</button>
</footer>

<!-- Splitter grip -->
<svg class="absolute top-[363px] left-[328px] h-5 w-2" viewBox="0 0 8 20"><path d="M1.500 0v20M5.500 0v20" stroke="#7f8ca6" stroke-dasharray="1 3"/><path d="M3.500 2v18" stroke="#7f8ca6" stroke-dasharray="1 3"/></svg>

<!-- Site watermark -->
<div class="pointer-events-none absolute top-2 left-1 flex">
  <svg class="h-[58px] w-[58px]" viewBox="0 0 58 58"><path d="M1 34A27 27 0 0 1 49 14L41 18A19 19 0 0 0 15 26l-8 11z" fill="#3a93d2"/><path d="M6 38 26 11h14l10 8-2 18-12 8-14 2z" fill="#fff" opacity=".85"/><path d="M9 30 26 12v8l-8 8v15h-6V32z" fill="#3a93d2"/><path d="M26 20h6v-6h7v27h-6V27h-7z" fill="#3a93d2"/><path d="M40 17c8 0 14 4 17 9-1 14-10 22-24 24l-1 7h-8l2-14c12 2 22-5 22-12 0-5-3-8-8-9z" fill="#f0a050" opacity=".9"/><path d="M4 41q8 10 20 12l-1 5q-12-3-19-17z" fill="#f0a050" opacity=".9"/></svg>
  <div class="pt-1 pl-[3px]">
    <p class="font-['Noto_Sans_CJK_SC',sans-serif] text-[27px] leading-7 font-bold text-[#3f9ce8]/90">河东软件园</p>
    <p class="font-['Liberation_Serif',serif] text-xl leading-8 font-bold text-[#54ac4c]">www.pc0359.cn</p>
  </div>
</div>

<!-- Upload widget -->
<button class="absolute top-4 right-[88px] flex h-[25px] w-[104px] items-center overflow-hidden rounded-[3px] border border-[#5c9cf5] bg-gradient-to-b from-[#f6faff] to-[#d8e8fd] text-xs text-[#6fa3ee]">
  <span class="flex h-full w-[29px] items-center justify-center bg-[#5496f8]"><svg class="h-4 w-5" viewBox="0 0 20 16" fill="none" stroke="#fff" stroke-width="2.200"><circle cx="10" cy="4.500" r="3.200"/><circle cx="5" cy="11" r="3.500"/><circle cx="15" cy="11" r="3.500"/></svg></span><span class="flex-1 text-center">拖拽上传</span>
</button>

<!-- Text effect menu -->
<div role="menu" class="absolute top-[107px] right-[-1px] flex w-[142px] flex-col border border-[#d0d0d0] bg-white pt-px text-xs text-[#444] shadow-md">
  <button role="menuitem" class="flex h-[27px] items-center pr-1.5 pl-2.5"><svg class="h-3.5 w-3.5" viewBox="0 0 14 14"><path d="m1 13 4.500-12h2L12 13H9.500l-1-3h-4l-1 3zM5 8h3L6.500 4z" fill="#fff" stroke="#888" stroke-width=".9"/></svg><span class="ml-[9px]">阴影(S)</span><svg class="ml-auto h-1.5 w-1" viewBox="0 0 4 6"><path d="M0 0v6l4-3z" fill="#555"/></svg></button>
  <button role="menuitem" class="flex h-[27px] items-center pr-1.5 pl-2.5"><svg class="h-3.5 w-3.5" viewBox="0 0 14 14"><path d="m1 12 4.500-11h2L12 12H9.500l-1-3h-4l-1 3zM5 7h3L6.500 4z" fill="#fff" stroke="#999" stroke-width=".9"/></svg><span class="ml-[9px]">倒影(R)</span><svg class="ml-auto h-1.5 w-1" viewBox="0 0 4 6"><path d="M0 0v6l4-3z" fill="#555"/></svg></button>
  <button role="menuitem" class="flex h-[27px] items-center bg-[#fde3d6] pr-1.5 pl-2.5"><svg class="h-3.5 w-3.5" viewBox="0 0 14 14"><path d="m1 13 4.500-12h2L12 13H9.500l-1-3h-4l-1 3zM5 8h3L6.500 4z" fill="#fff" stroke="#888" stroke-width="1.100"/></svg><span class="ml-[9px]">发光(G)</span><svg class="ml-auto h-1.5 w-1" viewBox="0 0 4 6"><path d="M0 0v6l4-3z" fill="#555"/></svg></button>
  <button role="menuitem" class="flex h-[27px] items-center pr-1.5 pl-2.5"><svg class="h-3.5 w-3.5" viewBox="0 0 14 14"><path d="M7 1h2l4 11-2 1z" fill="#666"/><path d="m1 13 4-12h2l4 12H9l-1-3H4.500l-1 3zM5 8h2.500L6 4z" fill="#fff" stroke="#777" stroke-width=".9"/></svg><span class="ml-[9px]">三维旋转(D)</span><svg class="ml-auto h-1.5 w-1" viewBox="0 0 4 6"><path d="M0 0v6l4-3z" fill="#555"/></svg></button>
  <button role="menuitem" class="flex h-[27px] items-center pr-1.5 pl-2.5"><span class="w-3.5 text-[8px] text-[#555]">abc</span><span class="ml-[9px]">转换(T)</span><svg class="ml-auto h-1.5 w-1" viewBox="0 0 4 6"><path d="M0 0v6l4-3z" fill="#555"/></svg></button>
  <div class="mt-px mr-0.5 ml-8 border-t border-[#e2e2e2]"></div>
  <button role="menuitem" class="flex h-[29px] items-center pl-[33px]">更多设置(O)...</button>
</div>

<!-- Glow gallery -->
<div class="absolute top-[164px] right-[140px] w-[335px] border border-[#e8e8ee] bg-white p-px pb-[5px] text-xs text-[#444] shadow-md">
  <h3 class="h-[21px] bg-[#e3e6ec] px-2 leading-[21px]">无发光</h3>
  <button aria-label="无发光" class="mt-[3px] mb-1 ml-[3px] flex h-[60px] w-[54px] items-center justify-center bg-[#f2b9a6]"><svg class="h-10 w-10" viewBox="0 0 40 40"><text x="20" y="30" text-anchor="middle" font-family="Liberation Sans, sans-serif" font-size="29" font-weight="700" fill="url(#glassA)" stroke="#c4d0f0" stroke-width=".8">A</text></svg></button>
  <h3 class="h-[21px] bg-[#e3e6ec] px-2 leading-[21px]">发光变体</h3>
  <div id="glows" class="mt-[3px] ml-0.5 grid grid-cols-[repeat(6,54px)]"></div>
</div>

<!-- Pointer arrow -->
<svg class="pointer-events-none absolute top-[100px] left-[1000px] h-[280px] w-[250px]" viewBox="0 0 250 280">
  <g opacity=".5" filter="url(#soft)" fill="#444" stroke="#444"><path d="M235 12 31 260" stroke-width="4"/><path d="m17 274 10-24 12 11z"/></g>
  <path d="M231 7 28 254" stroke="#d81018" stroke-width="3.500" stroke-linecap="round"/>
  <path d="m13 270 10-25 4 7 8 4z" fill="#f00" stroke="#f00"/>
</svg>

<script>
  // Four glow strengths by six theme colours.
  const colours = ['#7db4e4', '#f2965c', '#b4b8c2', '#fbce45', '#7f9be0', '#98cc7a'];
  const widths = [3, 5, 8, 11];
  const font = 'text-anchor="middle" font-family="Liberation Sans, sans-serif" font-size="27" font-weight="700"';
  document.getElementById('glows').innerHTML = widths.map((w, r) => colours.map((c, i) =>
    `<button aria-label="发光 ${r + 1}-${i + 1}" class="flex h-[60px] items-center justify-center"><svg class="h-11 w-11" viewBox="0 0 44 44"><text x="22" y="31" ${font} fill="${c}" stroke="${c}" stroke-width="${w}" stroke-linejoin="round" opacity=".55" filter="url(#soft)">A</text><text x="22" y="31" ${font} fill="url(#glassA)" stroke="#b4c3ec" stroke-width=".7">A</text></svg></button>`
  ).join('')).join('');
</script>
</body>
</html>
